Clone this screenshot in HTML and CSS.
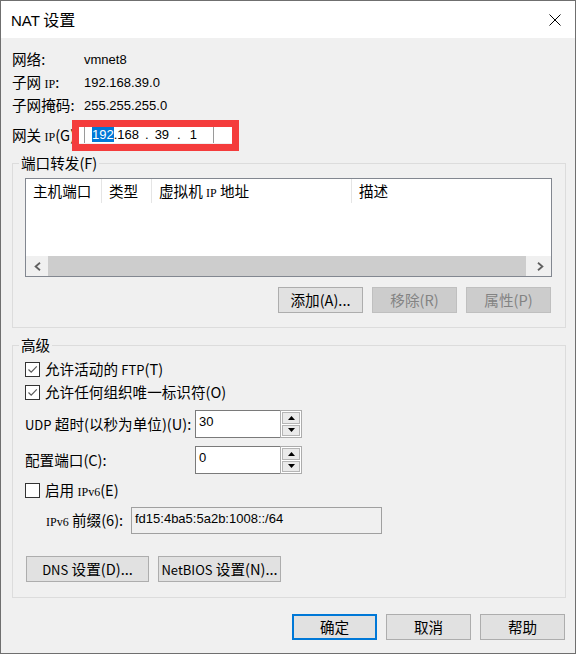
FILE: index.html
```html
<!DOCTYPE html>
<html lang="zh-CN">
<head>
<meta charset="utf-8">
<title>NAT 设置</title>
<link rel="stylesheet" href="styles.css">
</head>
<body>
<div class="window">
  <div class="titlebar">
    <div class="title"><span class="tl">NAT</span> <span class="tz">设置</span></div>
    <svg class="close" width="12" height="12" viewBox="0 0 12 12"><path d="M0.5 0.5 L11.5 11.5 M11.5 0.5 L0.5 11.5" stroke="#000" stroke-width="1" fill="none"/></svg>
  </div>
  <div class="content">
    <div class="info">
      <div class="lbl">网络:</div><div class="val">vmnet8</div>
      <div class="lbl">子网 <span class="ip">IP</span>:</div><div class="val">192.168.39.0</div>
      <div class="lbl">子网掩码:</div><div class="val">255.255.255.0</div>
    </div>
    <div class="gw">
      <div class="lbl gwl">网关 <span class="ip">IP</span>(G)</div>
      <div class="ipbox"><div class="ipinner"><span class="sel">192</span>.168<span class="d1">.</span><span class="s2">39</span><span class="d2">.</span><span class="s3">1</span></div></div>
      <div class="mark"></div>
    </div>

    <fieldset class="group g1">
      <legend>端口转发(F)</legend>
      <div class="list">
        <div class="lhead">
          <div class="col c1">主机端口</div>
          <div class="col c2">类型</div>
          <div class="col c3">虚拟机 <span class="ip">IP</span> 地址</div>
          <div class="col c4">描述</div>
        </div>
        <div class="lbody"></div>
        <div class="hscroll">
          <div class="sarrow sl"><svg width="7" height="9" viewBox="0 0 7 9"><polyline points="6,0.7 1.6,4.5 6,8.3" fill="none" stroke="#606060" stroke-width="1.8"/></svg></div>
          <div class="thumb"></div>
          <div class="sarrow sr"><svg width="7" height="9" viewBox="0 0 7 9"><polyline points="1,0.7 5.4,4.5 1,8.3" fill="none" stroke="#606060" stroke-width="1.8"/></svg></div>
        </div>
      </div>
      <div class="btnrow">
        <button class="btn">添加(A)...</button>
        <button class="btn dis">移除(R)</button>
        <button class="btn dis">属性(P)</button>
      </div>
    </fieldset>

    <fieldset class="group g2">
      <legend>高级</legend>
      <div class="chk r1">
        <span class="box"><svg width="13" height="13" viewBox="0 0 13 13"><polyline points="2.5,6.5 5.2,9.2 10.8,3.4" fill="none" stroke="#5a5a5a" stroke-width="1.2"/></svg></span>
        <span class="ct">允许活动的 <span class="sm">FTP</span>(T)</span>
      </div>
      <div class="chk">
        <span class="box"><svg width="13" height="13" viewBox="0 0 13 13"><polyline points="2.5,6.5 5.2,9.2 10.8,3.4" fill="none" stroke="#5a5a5a" stroke-width="1.2"/></svg></span>
        <span class="ct">允许任何组织唯一标识符(O)</span>
      </div>
      <div class="frow udp">
        <div class="flbl"><span class="sm">UDP</span> 超时(以秒为单位)(U):</div>
        <div class="spin">
          <div class="spin-field">30</div>
          <div class="spin-btns">
            <div class="sb"><svg width="7" height="4" viewBox="0 0 7 4"><polygon points="0,4 3.5,0 7,4" fill="#000"/></svg></div>
            <div class="sb"><svg width="7" height="4" viewBox="0 0 7 4"><polygon points="0,0 7,0 3.5,4" fill="#000"/></svg></div>
          </div>
        </div>
      </div>
      <div class="frow port">
        <div class="flbl">配置端口(C):</div>
        <div class="spin">
          <div class="spin-field">0</div>
          <div class="spin-btns">
            <div class="sb"><svg width="7" height="4" viewBox="0 0 7 4"><polygon points="0,4 3.5,0 7,4" fill="#000"/></svg></div>
            <div class="sb"><svg width="7" height="4" viewBox="0 0 7 4"><polygon points="0,0 7,0 3.5,4" fill="#000"/></svg></div>
          </div>
        </div>
      </div>
      <div class="chk r3">
        <span class="box"></span>
        <span class="ct">启用 <span class="ip">IPv6</span>(E)</span>
      </div>
      <div class="prow">
        <div class="plbl"><span class="ip">IPv6</span> 前缀(6):</div>
        <div class="pfield">fd15:4ba5:5a2b:1008::/64</div>
      </div>
      <div class="dnsrow">
        <button class="btn wide"><span class="sm">DNS</span> 设置(D)...</button>
        <button class="btn wide"><span class="sm">NetBIOS</span> 设置(N)...</button>
      </div>
    </fieldset>

    <div class="footer">
      <button class="btn def">确定</button>
      <button class="btn">取消</button>
      <button class="btn">帮助</button>
    </div>
  </div>
</div>
</body>
</html>
```
FILE: styles.css
```css
* { box-sizing: border-box; }
html, body { margin: 0; padding: 0; background: #f0f0f0; }
body {
  font-family: "Noto Sans CJK SC", "Noto Sans", sans-serif;
  font-size: 14.6px;
  line-height: 1.2;
  color: #000;
}
.window {
  width: 576px;
  height: 654px;
  border: 1px solid #6f6f6f;
  background: #f0f0f0;
  display: flex;
  flex-direction: column;
}
.titlebar {
  flex: none;
  height: 37px;
  background: #fff;
  display: flex;
  align-items: center;
  justify-content: space-between;
  padding: 0 14px 0 10px;
}
.title { line-height: 1; white-space: nowrap; }
.tl { font-family: "Liberation Sans", sans-serif; font-size: 15px; }
.tz { font-size: 16px; }
.close { display: block; }

.content {
  flex: 1;
  display: flex;
  flex-direction: column;
  padding: 10px 9px 0 11px;
}
.info {
  display: grid;
  grid-template-columns: 72px auto;
  grid-auto-rows: 23px;
  align-items: center;
}
.lbl { white-space: nowrap; line-height: 1; }
.val { font-family: "Liberation Sans", sans-serif; font-size: 13px; line-height: 1; }
.ip { font-family: "Liberation Serif", serif; font-size: 12px; }
.sm { font-size: 13px; }

.gw {
  position: relative;
  margin-top: 3px;
  height: 30px;
  display: flex;
  align-items: center;
}
.gwl { width: 67px; flex: none; }
.ipbox {
  width: 153px;
  height: 16px;
  background: #fff;
  padding-left: 5px;
}
.ipinner {
  width: 130px;
  height: 16px;
  border-left: 1px solid #9a9a9a;
  border-right: 1px solid #9a9a9a;
  padding-left: 7px;
  font-family: "Liberation Sans", sans-serif;
  font-size: 13px;
  line-height: 15px;
  white-space: nowrap;
}
.sel { background: #0078d7; color: #fff; }
.d1 { margin-left: 6px; }
.s2 { margin-left: 6px; }
.d2 { margin-left: 8px; }
.s3 { margin-left: 9px; }
.mark {
  position: absolute;
  left: 60px;
  top: 0;
  width: 167px;
  height: 31px;
  border: 7px solid #f43c3c;
}

.group {
  margin: 0;
  min-width: 0;
  border: 1px solid #dcdcdc;
  padding: 5px 13px 14px 12px;
}
.group legend {
  padding: 0 2px;
  margin-left: -6px;
  line-height: 20px;
}
.g1 { margin-top: 3px; }
.g2 { margin-top: 7px; padding-top: 3px; padding-bottom: 15px; }

.list {
  height: 99px;
  border: 1px solid #828790;
  background: #fff;
  display: flex;
  flex-direction: column;
}
.lhead { height: 24px; display: flex; flex: none; }
.col {
  padding-left: 7px;
  line-height: 24px;
  white-space: nowrap;
}
.c1, .c2, .c3 { border-right: 1px solid #e5e5e5; }
.c1 { width: 76px; }
.c2 { width: 50px; }
.c3 { width: 200px; }
.c4 { flex: 1; }
.lbody { flex: 1; }
.hscroll {
  height: 20px;
  flex: none;
  display: flex;
  background: #f0f0f0;
}
.sarrow {
  width: 22px;
  display: flex;
  align-items: center;
  justify-content: center;
}
.sr { width: 21px; margin-left: 4px; }
.thumb { flex: 1; background: #cdcdcd; }

.btnrow {
  display: flex;
  justify-content: flex-end;
  gap: 9px;
  margin-top: 10px;
  padding-right: 1px;
}
.btn {
  font: inherit;
  color: #000;
  width: 85px;
  height: 26px;
  padding: 0;
  background: #e1e1e1;
  border: 1px solid #adadad;
  line-height: 22px;
  white-space: nowrap;
}
.btn.dis { background: #cccccc; border-color: #bfbfbf; color: #838383; }
.btn.def { border: 2px solid #0078d7; }
.btn.wide { width: 123px; }

.chk {
  height: 23px;
  display: flex;
  align-items: center;
  gap: 5px;
}
.box {
  width: 15px;
  height: 15px;
  border: 1px solid #333;
  background: #fff;
  display: block;
  flex: none;
}
.box svg { display: block; }
.ct { white-space: nowrap; line-height: 1; }

.frow { display: flex; align-items: center; height: 28px; }
.udp { margin-top: 6px; }
.port { margin-top: 8px; }
.flbl { width: 170px; white-space: nowrap; line-height: 1; }
.spin { display: flex; width: 107px; height: 28px; }
.spin-field {
  flex: 1;
  background: #fff;
  border: 1px solid #7a7a7a;
  border-right: none;
  padding: 2px 3px;
  font-family: "Liberation Sans", sans-serif;
  font-size: 13px;
  line-height: 18px;
}
.spin-btns {
  width: 22px;
  background: #fff;
  border: 1px solid #acacac;
  padding: 1px;
  display: flex;
  flex-direction: column;
  gap: 1px;
}
.sb {
  flex: 1;
  background: #eaeaea;
  border: 1px solid #b5b5b5;
  display: flex;
  align-items: center;
  justify-content: center;
}
.sb svg { display: block; }

.r3 { margin-top: 5px; }
.prow {
  margin-top: 5px;
  height: 27px;
  display: flex;
  align-items: center;
  padding-left: 21px;
}
.plbl { width: 85px; white-space: nowrap; line-height: 1; }
.pfield {
  width: 251px;
  height: 27px;
  border: 1px solid #a0a0a0;
  background: #f0f0f0;
  padding: 2px 3px;
  font-family: "Liberation Sans", sans-serif;
  font-size: 13px;
  line-height: 18px;
}
.dnsrow {
  margin-top: 22px;
  display: flex;
  gap: 9px;
  padding-left: 1px;
}

.footer {
  margin-top: 16px;
  display: flex;
  justify-content: flex-end;
  gap: 9px;
  padding-right: 1px;
}
```
